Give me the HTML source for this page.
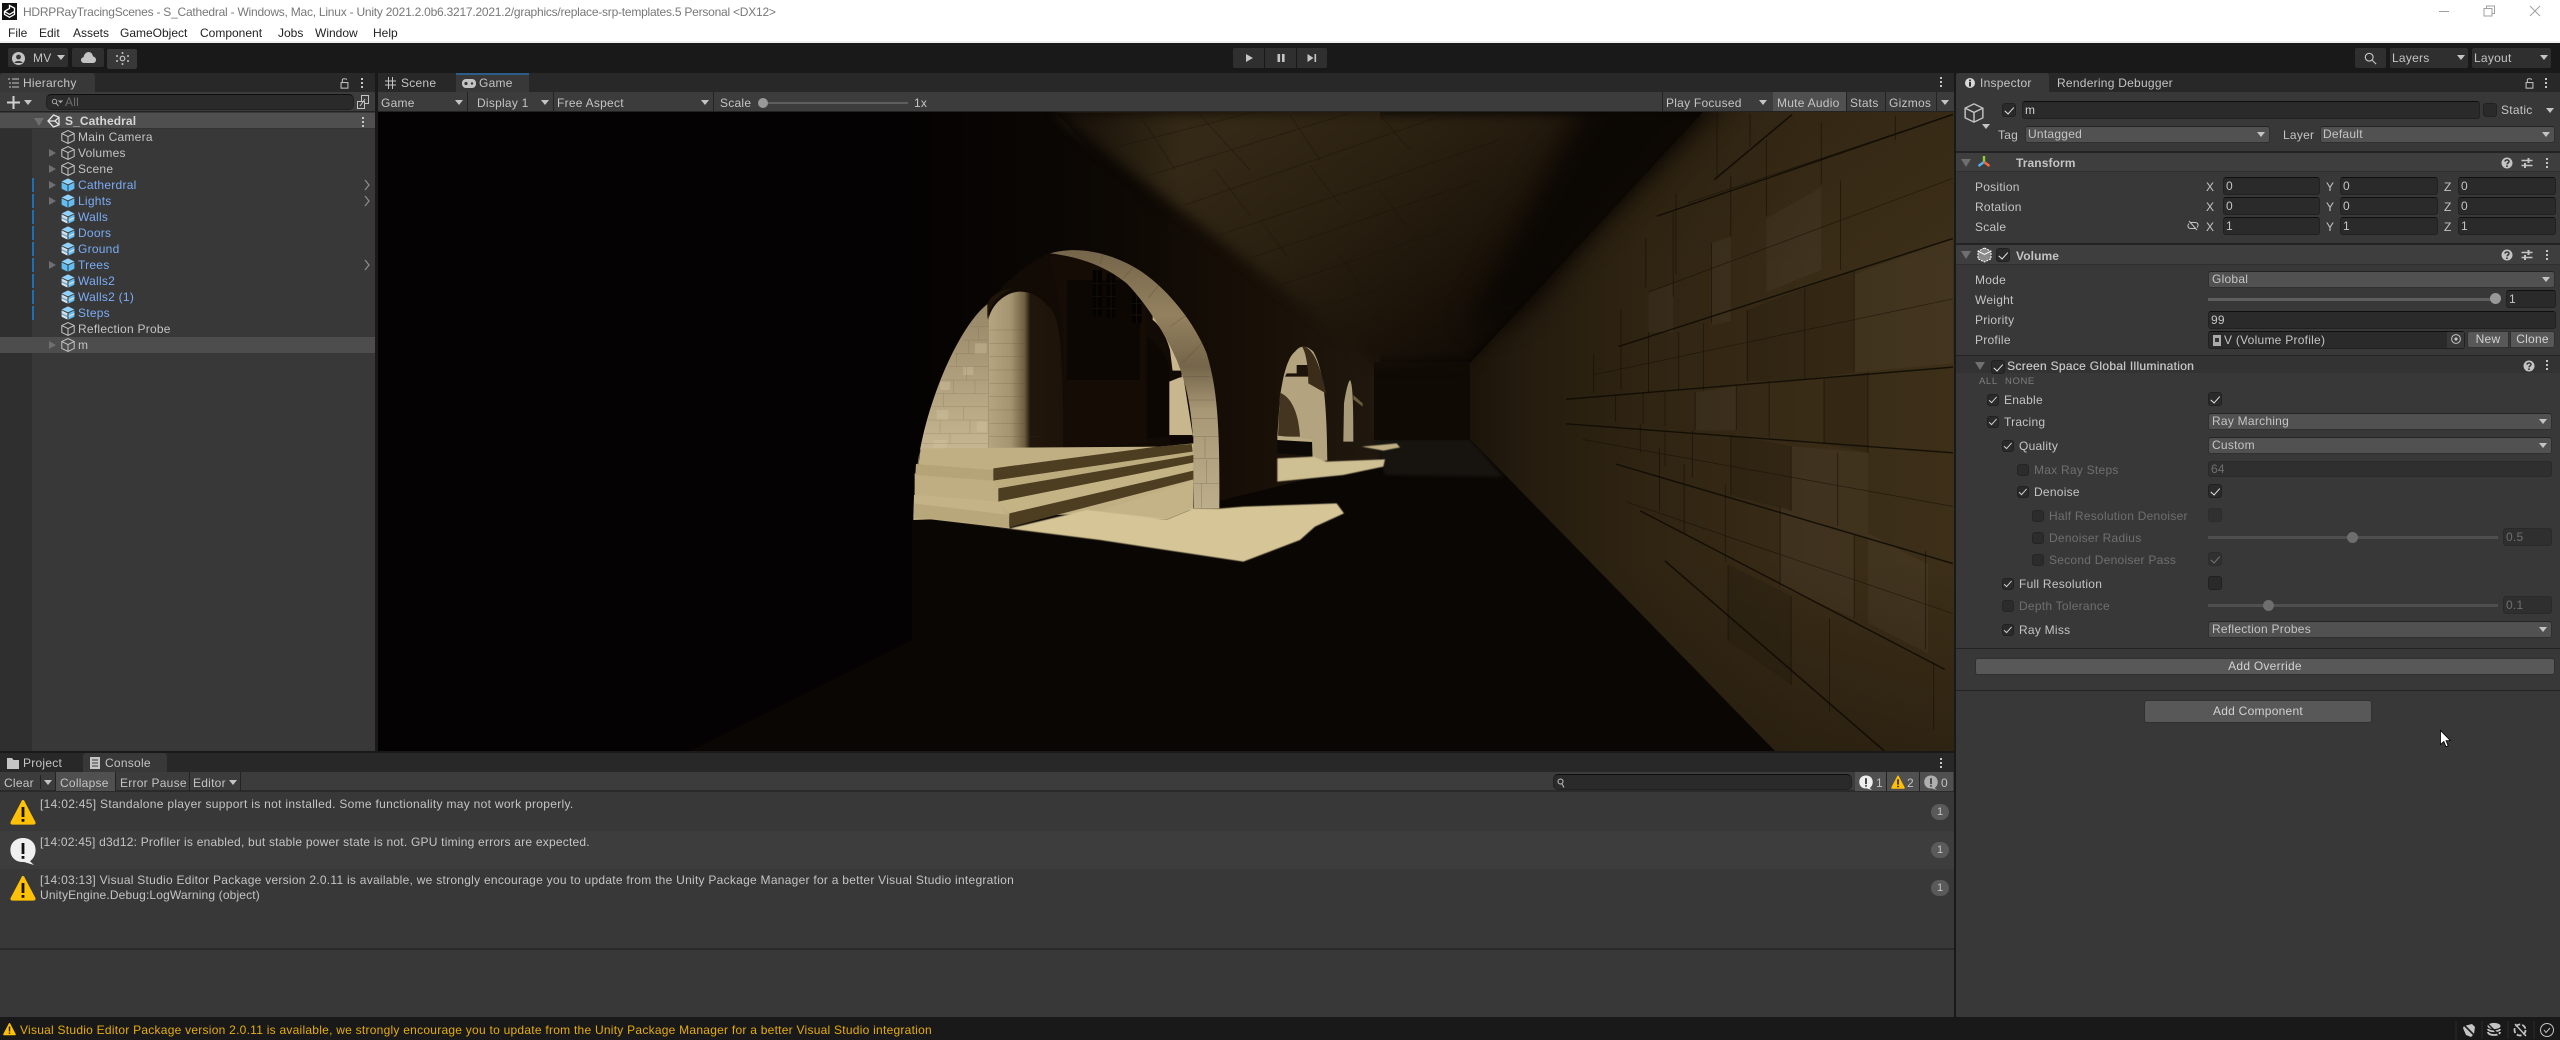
<!DOCTYPE html>
<html><head><meta charset="utf-8"><title>Unity</title>
<style>
html,body{margin:0;padding:0;background:#191919;width:2560px;height:1040px;overflow:hidden}
body{position:relative;font-family:"Liberation Sans",sans-serif;font-size:12px;color:#c4c4c4}
.r{position:absolute;box-sizing:border-box}
.t{position:absolute;line-height:16px;height:16px;white-space:nowrap;letter-spacing:.25px;color:#c4c4c4}
.b{color:#7bacf5}.d{color:#6f6f6f}.w{color:#d2d2d2}
.ar{position:absolute;width:0;height:0;border-left:4px solid transparent;border-right:4px solid transparent;border-top:5px solid #c4c4c4}
.tg{position:absolute;width:0;height:0;border-top:4.5px solid transparent;border-bottom:4.5px solid transparent;border-left:7px solid #6f6f6f}
.tgd{position:absolute;width:0;height:0;border-left:5px solid transparent;border-right:5px solid transparent;border-top:8px solid #6f6f6f}
.f{position:absolute;box-sizing:border-box;background:#2a2a2a;border:1px solid #212121;border-top-color:#0f0f0f;border-radius:3px}
.dd{position:absolute;box-sizing:border-box;background:#515151;border:1px solid #303030;border-top-color:#242424;border-radius:3px;height:17px}
.btn{position:absolute;box-sizing:border-box;background:#585858;border:1px solid #303030;border-radius:3px;text-align:center;line-height:15px;letter-spacing:.25px;color:#d2d2d2}
.cb{position:absolute;box-sizing:border-box;width:14px;height:14px;background:#2a2a2a;border:1px solid #212121;border-radius:3px}
.cs{width:12px;height:12px}
.ck::after{content:"";position:absolute;left:3.5px;top:0.5px;width:3.5px;height:7.5px;border:solid #e4e4e4;border-width:0 1.5px 1.5px 0;transform:rotate(42deg)}
.cs.ck::after{left:3px;top:0;width:3px;height:6.5px;border-width:0 1px 1px 0;border-color:#cfcfcf}
.dck::after{border-color:#777}
.dots{position:absolute;width:2px;height:2px;background:#c4c4c4;box-shadow:0 4px #c4c4c4,0 8px #c4c4c4}
.sv{position:absolute;overflow:visible}
.sep{position:absolute;width:1px;background:#232323}
.bl{position:absolute;left:32px;width:2px;height:14px;background:#1c6fb5}
</style></head><body>

<svg width="0" height="0" style="position:absolute">
<defs>
<symbol id="cube" viewBox="0 0 14 14"><path d="M7 .6 13.2 3.6V10.4L7 13.4 .8 10.4V3.6ZM.8 3.6 7 6.6 13.2 3.6M7 6.6V13.4" fill="none" stroke="#c4c4c4" stroke-width="1"/></symbol>
<symbol id="pf" viewBox="0 0 14 14"><path d="M7 .4 13.4 3.5 7 6.4 .6 3.5Z" fill="#8fd2fb"/><path d="M.6 4.4 6.5 7.2V13.6L.6 10.7Z" fill="#62bdf2"/><path d="M13.4 4.4 7.5 7.2V13.6L13.4 10.7Z" fill="#62bdf2"/></symbol>
<symbol id="pm" viewBox="0 0 14 14"><path d="M7 .4 13.4 3.5 7 6.4 .6 3.5Z" fill="#8fd2fb"/><path d="M.6 4.4 6.5 7.2V13.6L.6 10.7Z" fill="#d8dfe5"/><path d="M.6 7 6.5 9.8V11.2L.6 8.4Z" fill="#62a8d8"/><path d="M13.4 4.4 7.5 7.2V13.6L13.4 10.7Z" fill="#62bdf2"/><path d="M13.4 7 7.5 9.8V11.2L13.4 8.4Z" fill="#d8dfe5"/></symbol>
<symbol id="warn" viewBox="0 0 26 26"><path d="M13 1 C14 1 14.6 2 15 3.2L25.4 23C26 24.6 25 25.6 23.6 25.6H2.4C1 25.6 0 24.6.6 23L11 3.2C11.4 2 12 1 13 1Z" fill="#ffc107"/><rect x="11.6" y="8" width="2.8" height="10" fill="#1a1407"/><rect x="11.6" y="20" width="2.8" height="2.8" fill="#1a1407"/></symbol>
<symbol id="info" viewBox="0 0 26 28"><path d="M13 1C20.5 1 25.6 6 25.6 13S21 23.5 20 24.2L24 28 14 25C5.5 25.6.4 20 .4 13S5.5 1 13 1Z" fill="#efefef"/><rect x="11.6" y="6" width="2.8" height="11" fill="#111"/><rect x="11.6" y="19" width="2.8" height="2.8" fill="#111"/></symbol>
<symbol id="help" viewBox="0 0 12 12"><circle cx="6" cy="6" r="5.5" fill="#c4c4c4"/><path d="M4 4.6C4 2.4 8 2.4 8 4.5 8 6 6 6 6 7.4" fill="none" stroke="#333" stroke-width="1.5"/><rect x="5.2" y="8.4" width="1.6" height="1.6" fill="#333"/></symbol>
<symbol id="sl" viewBox="0 0 12 12"><path d="M.5 3.5H11.5M.5 8.5H11.5" stroke="#c4c4c4" stroke-width="1.4"/><path d="M7.5 1V6M4 6V11" stroke="#c4c4c4" stroke-width="2"/></symbol>
<symbol id="lock" viewBox="0 0 10 14"><path d="M2.5 6V3.2C2.5 1.6 7.5 1.6 7.5 3.2" fill="none" stroke="#c4c4c4" stroke-width="1.2"/><rect x="1" y="6.5" width="8" height="6.5" fill="none" stroke="#c4c4c4" stroke-width="1.2"/></symbol>
<linearGradient id="gBase" gradientUnits="userSpaceOnUse" x1="900" x2="1374" y1="0" y2="0"><stop offset="0" stop-color="#040202"/><stop offset=".45" stop-color="#0d0804"/><stop offset=".75" stop-color="#181007"/><stop offset="1" stop-color="#20170e"/></linearGradient>
<linearGradient id="gCeil" gradientUnits="userSpaceOnUse" x1="1250" y1="113" x2="1440" y2="370"><stop offset="0" stop-color="#342916"/><stop offset=".4" stop-color="#2a2011"/><stop offset=".75" stop-color="#1d150a"/><stop offset="1" stop-color="#120c06"/></linearGradient>
<linearGradient id="gCeilL" gradientUnits="userSpaceOnUse" x1="1060" y1="113" x2="1180" y2="113"><stop offset="0" stop-color="#0a0603" stop-opacity=".75"/><stop offset="1" stop-color="#0a0603" stop-opacity="0"/></linearGradient>
<linearGradient id="gWall" gradientUnits="userSpaceOnUse" x1="1470" y1="0" x2="1954" y2="0"><stop offset="0" stop-color="#1b140a"/><stop offset=".12" stop-color="#251c0f"/><stop offset=".35" stop-color="#2f2412"/><stop offset=".7" stop-color="#392c17"/><stop offset="1" stop-color="#3d2f18"/></linearGradient>
<linearGradient id="gWallV" gradientUnits="userSpaceOnUse" x1="0" y1="113" x2="0" y2="751"><stop offset="0" stop-color="#0c0804" stop-opacity=".12"/><stop offset=".25" stop-color="#0c0804" stop-opacity="0"/><stop offset=".7" stop-color="#0c0804" stop-opacity="0"/><stop offset="1" stop-color="#0c0804" stop-opacity=".3"/></linearGradient>
<linearGradient id="gCol" gradientUnits="userSpaceOnUse" x1="265" x2="490" y1="0" y2="0"><stop offset="0" stop-color="#b5a580"/><stop offset=".3" stop-color="#a4946f"/><stop offset=".48" stop-color="#6f5f42"/><stop offset=".56" stop-color="#20160b"/><stop offset="1" stop-color="#1d130a"/></linearGradient>
<linearGradient id="gSof" gradientUnits="userSpaceOnUse" x1="0" y1="30" x2="0" y2="805"><stop offset="0" stop-color="#75654a"/><stop offset=".25" stop-color="#93815e"/><stop offset=".45" stop-color="#75654a"/><stop offset=".62" stop-color="#a89876"/><stop offset="1" stop-color="#bdae8b"/></linearGradient>
<linearGradient id="gLw" gradientUnits="userSpaceOnUse" x1="0" y1="200" x2="0" y2="630"><stop offset="0" stop-color="#968767"/><stop offset=".5" stop-color="#b09f7c"/><stop offset="1" stop-color="#c6b691"/></linearGradient>
<filter id="bl1" color-interpolation-filters="sRGB"><feGaussianBlur stdDeviation="1.6"/></filter>
<filter id="bl4" color-interpolation-filters="sRGB" x="-10%" y="-10%" width="120%" height="120%"><feGaussianBlur stdDeviation="6"/></filter>
<filter id="bl15" color-interpolation-filters="sRGB" x="-30%" y="-30%" width="160%" height="160%"><feGaussianBlur stdDeviation="14"/></filter>
<filter id="bl05" color-interpolation-filters="sRGB"><feGaussianBlur stdDeviation=".8"/></filter>
</defs></svg>

<!-- Title bar -->
<div class="r" style="left:0;top:0;width:2560px;height:43px;background:#fff;border-bottom:2px solid #f0f0f0"></div>
<svg class="sv" style="left:2px;top:3px" width="15" height="17" viewBox="0 0 15 17"><rect width="15" height="17" fill="#111"/><path d="M7.5 2.5 12.5 5.2V11.4L7.5 14.3 2.5 11.4V8.4L7.5 5.4ZM2.5 8.4 7.5 11.4 12.5 8.4" fill="none" stroke="#fff" stroke-width="1.3"/></svg>
<div class="t" style="left:23px;top:4px;color:#787878;letter-spacing:-.23px">HDRPRayTracingScenes - S_Cathedral - Windows, Mac, Linux - Unity 2021.2.0b6.3217.2021.2/graphics/replace-srp-templates.5 Personal &lt;DX12&gt;</div>
<div class="t" style="left:8px;top:25px;color:#222;letter-spacing:0">File</div>
<div class="t" style="left:39px;top:25px;color:#222;letter-spacing:0">Edit</div>
<div class="t" style="left:73px;top:25px;color:#222;letter-spacing:0">Assets</div>
<div class="t" style="left:120px;top:25px;color:#222;letter-spacing:0">GameObject</div>
<div class="t" style="left:200px;top:25px;color:#222;letter-spacing:0">Component</div>
<div class="t" style="left:278px;top:25px;color:#222;letter-spacing:0">Jobs</div>
<div class="t" style="left:315px;top:25px;color:#222;letter-spacing:0">Window</div>
<div class="t" style="left:373px;top:25px;color:#222;letter-spacing:0">Help</div>
<svg class="sv" style="left:2430px;top:4px" width="120" height="14" viewBox="0 0 120 14" fill="none" stroke="#a0a0a0"><path d="M9 7.5H19"/><path d="M54 4.5H62V12H54ZM56.5 4.5V2H64.5V9.5H62"/><path d="M100 2 110 12M110 2 100 12"/></svg>

<!-- Top toolbar -->
<div class="r" style="left:8px;top:48px;width:60px;height:19px;background:#2f2f2f;border-radius:2px"></div>
<svg class="sv" style="left:12px;top:52px" width="13" height="13" viewBox="0 0 13 13"><circle cx="6.5" cy="6.5" r="6.5" fill="#c4c4c4"/><circle cx="6.5" cy="5" r="2.4" fill="#383838"/><path d="M2.4 11C3 8.4 10 8.4 10.6 11" fill="#383838"/></svg>
<div class="t" style="left:33px;top:50px">MV</div>
<div class="ar" style="left:57px;top:55px"></div>
<div class="r" style="left:72px;top:48px;width:32px;height:19px;background:#2f2f2f;border-radius:2px"></div>
<svg class="sv" style="left:81px;top:52px" width="15" height="11" viewBox="0 0 15 11"><path d="M3.5 11C1 11 0 9.5 0 8 0 6.5 1 5.4 2.6 5.2 3 2.2 5.2 0 7.6 0 10 0 11.6 2 12 4.4 13.8 4.8 15 6 15 8 15 9.8 13.6 11 12 11Z" fill="#c4c4c4"/></svg>
<div class="r" style="left:107px;top:49px;width:30px;height:20px;background:#383838;border-radius:2px"></div>
<svg class="sv" style="left:116px;top:52px" width="13" height="13" viewBox="0 0 13 13" fill="#c4c4c4"><circle cx="6.5" cy="6.5" r="2.3" fill="none" stroke="#c4c4c4" stroke-width="1.2"/><circle cx="6.5" cy="1" r="1"/><circle cx="6.5" cy="12" r="1"/><circle cx="1" cy="4" r="1"/><circle cx="12" cy="4" r="1"/><circle cx="1" cy="9" r="1"/><circle cx="12" cy="9" r="1"/></svg>

<div class="r" style="left:1233px;top:48px;width:31px;height:20px;background:#2f2f2f;border-radius:2px 0 0 2px"></div>
<div class="r" style="left:1265px;top:48px;width:31px;height:20px;background:#2f2f2f"></div>
<div class="r" style="left:1297px;top:48px;width:30px;height:20px;background:#2f2f2f;border-radius:0 2px 2px 0"></div>
<svg class="sv" style="left:1233px;top:48px" width="94" height="20" viewBox="0 0 94 20" fill="#c4c4c4"><path d="M13 6 20 10 13 14Z"/><rect x="44.5" y="6" width="2.6" height="8"/><rect x="49" y="6" width="2.6" height="8"/><path d="M74.5 6 80.5 10 74.5 14Z"/><rect x="81.5" y="6" width="1.6" height="8"/></svg>

<div class="r" style="left:2355px;top:48px;width:31px;height:20px;background:#2f2f2f;border-radius:2px"></div>
<svg class="sv" style="left:2364px;top:52px" width="13" height="13" viewBox="0 0 15 15" fill="none" stroke="#c4c4c4" stroke-width="1.3"><circle cx="6" cy="6" r="4.5"/><path d="M9.5 9.5 14 14"/></svg>
<div class="r" style="left:2390px;top:48px;width:78px;height:20px;background:#2f2f2f;border-radius:2px"></div>
<div class="t" style="left:2392px;top:50px">Layers</div><div class="ar" style="left:2457px;top:55px"></div>
<div class="r" style="left:2472px;top:48px;width:79px;height:20px;background:#2f2f2f;border-radius:2px"></div>
<div class="t" style="left:2474px;top:50px">Layout</div><div class="ar" style="left:2540px;top:55px"></div>

<!-- Hierarchy panel -->
<div class="r" style="left:0;top:73px;width:375px;height:19px;background:#282828"></div>
<div class="r" style="left:0;top:73px;width:95px;height:19px;background:#383838;border-radius:3px 3px 0 0"></div>
<svg class="sv" style="left:8px;top:78px" width="11" height="10" viewBox="0 0 11 10" stroke="#c4c4c4"><path d="M0 1H2M4 1H11M1 5H3M4 5H11M1 9H3M4 9H11"/></svg>
<div class="t" style="left:23px;top:75px">Hierarchy</div>
<svg class="sv" style="left:340px;top:77px" width="9" height="12"><use href="#lock" width="9" height="12"/></svg>
<div class="dots" style="left:361px;top:78px"></div>
<div class="r" style="left:0;top:92px;width:375px;height:20px;background:#3c3c3c;border-bottom:1px solid #232323"></div>
<svg class="sv" style="left:7px;top:96px" width="13" height="13" viewBox="0 0 13 13"><path d="M6.5 0V13M0 6.5H13" stroke="#d0d0d0" stroke-width="2"/></svg>
<div class="ar" style="left:24px;top:100px"></div>
<div class="f" style="left:46px;top:94px;width:308px;height:16px;border-radius:5px"></div>
<svg class="sv" style="left:51px;top:98px" width="11" height="9" viewBox="0 0 11 9" fill="none" stroke="#a8a8a8"><circle cx="3.5" cy="3.5" r="2.2"/><path d="M5 5 7.5 8M8 3H11L9.5 4.5Z"/></svg>
<div class="t" style="left:65px;top:94px;color:#6e6e6e">All</div>
<svg class="sv" style="left:357px;top:95px" width="12" height="14" viewBox="0 0 12 14" fill="none" stroke="#c4c4c4"><rect x="4.5" y=".5" width="7" height="8"/><rect x=".5" y="6.5" width="7" height="7" fill="#3c3c3c"/><path d="M3 11 8 4"/></svg>
<div class="r" style="left:0;top:112px;width:375px;height:639px;background:#383838"></div>
<div class="r" style="left:0;top:129px;width:32px;height:622px;background:#2f2f2f"></div>
<div class="r" style="left:0;top:113px;width:375px;height:16px;background:#4f4f4f;border-bottom:1px solid #333"></div>
<div class="tgd" style="left:34px;top:118px"></div>
<svg class="sv" style="left:47px;top:114px" width="13" height="14" viewBox="0 0 13 14" fill="none" stroke="#e4e4e4" stroke-width="1.3"><path d="M6.5 1 12 3.2V10.8L6.5 13 1 7ZM1 7 8 7M8 7 12 3.2M8 7 12 10.8"/></svg>
<div class="t" style="left:65px;top:113px;color:#d6d6d6;font-weight:bold;letter-spacing:.1px">S_Cathedral</div>
<div class="dots" style="left:362px;top:117px"></div>

<div class="r" style="left:0;top:337px;width:375px;height:16px;background:#4d4d4d"></div>

<!-- hierarchy rows -->
<svg class="sv" style="left:61px;top:130px" width="14" height="14"><use href="#cube" width="14" height="14"/></svg><div class="t" style="left:78px;top:129px">Main Camera</div>
<div class="tg" style="left:49px;top:148.5px"></div><svg class="sv" style="left:61px;top:146px" width="14" height="14"><use href="#cube" width="14" height="14"/></svg><div class="t" style="left:78px;top:145px">Volumes</div>
<div class="tg" style="left:49px;top:164.5px"></div><svg class="sv" style="left:61px;top:162px" width="14" height="14"><use href="#cube" width="14" height="14"/></svg><div class="t" style="left:78px;top:161px">Scene</div>
<div class="bl" style="top:178px"></div><div class="tg" style="left:49px;top:180.5px"></div><svg class="sv" style="left:61px;top:178px" width="14" height="14"><use href="#pf" width="14" height="14"/></svg><div class="t b" style="left:78px;top:177px">Catherdral</div>
<div class="bl" style="top:194px"></div><div class="tg" style="left:49px;top:196.5px"></div><svg class="sv" style="left:61px;top:194px" width="14" height="14"><use href="#pf" width="14" height="14"/></svg><div class="t b" style="left:78px;top:193px">Lights</div>
<div class="bl" style="top:210px"></div><svg class="sv" style="left:61px;top:210px" width="14" height="14"><use href="#pm" width="14" height="14"/></svg><div class="t b" style="left:78px;top:209px">Walls</div>
<div class="bl" style="top:226px"></div><svg class="sv" style="left:61px;top:226px" width="14" height="14"><use href="#pm" width="14" height="14"/></svg><div class="t b" style="left:78px;top:225px">Doors</div>
<div class="bl" style="top:242px"></div><svg class="sv" style="left:61px;top:242px" width="14" height="14"><use href="#pm" width="14" height="14"/></svg><div class="t b" style="left:78px;top:241px">Ground</div>
<div class="bl" style="top:258px"></div><div class="tg" style="left:49px;top:260.5px"></div><svg class="sv" style="left:61px;top:258px" width="14" height="14"><use href="#pf" width="14" height="14"/></svg><div class="t b" style="left:78px;top:257px">Trees</div>
<div class="bl" style="top:274px"></div><svg class="sv" style="left:61px;top:274px" width="14" height="14"><use href="#pm" width="14" height="14"/></svg><div class="t b" style="left:78px;top:273px">Walls2</div>
<div class="bl" style="top:290px"></div><svg class="sv" style="left:61px;top:290px" width="14" height="14"><use href="#pm" width="14" height="14"/></svg><div class="t b" style="left:78px;top:289px">Walls2 (1)</div>
<div class="bl" style="top:306px"></div><svg class="sv" style="left:61px;top:306px" width="14" height="14"><use href="#pm" width="14" height="14"/></svg><div class="t b" style="left:78px;top:305px">Steps</div>
<svg class="sv" style="left:61px;top:322px" width="14" height="14"><use href="#cube" width="14" height="14"/></svg><div class="t" style="left:78px;top:321px">Reflection Probe</div>
<div class="tg" style="left:49px;top:340.5px"></div><svg class="sv" style="left:61px;top:338px" width="14" height="14"><use href="#cube" width="14" height="14"/></svg><div class="t" style="left:78px;top:337px">m</div>
<svg class="sv" style="left:364px;top:180px" width="7" height="90" viewBox="0 0 7 90" fill="none" stroke="#8a8a8a" stroke-width="1.3"><path d="M1 0 5 5 1 10M1 16 5 21 1 26M1 80 5 85 1 90"/></svg>

<!-- Game panel -->
<div class="r" style="left:378px;top:73px;width:1576px;height:19px;background:#282828"></div>
<div class="r" style="left:456px;top:73px;width:73px;height:19px;background:#383838;border-top:2px solid #2c5d87"></div>
<svg class="sv" style="left:385px;top:77px" width="11" height="12" viewBox="0 0 11 12" stroke="#c4c4c4"><path d="M3.5 0V12M7.5 0V12M0 4H11M0 8H11"/></svg>
<div class="t" style="left:401px;top:75px">Scene</div>
<svg class="sv" style="left:462px;top:79px" width="14" height="9" viewBox="0 0 14 9"><rect width="14" height="9" rx="4" fill="#c4c4c4"/><circle cx="4" cy="4.5" r="1.6" fill="#383838"/><circle cx="10" cy="4.5" r="1.2" fill="#383838"/></svg>
<div class="t" style="left:479px;top:75px">Game</div>
<div class="dots" style="left:1940px;top:77px"></div>
<div class="r" style="left:378px;top:92px;width:1576px;height:20px;background:#3c3c3c;border-bottom:1px solid #232323"></div>
<div class="t" style="left:381px;top:95px">Game</div><div class="ar" style="left:455px;top:100px"></div><div class="sep" style="left:467px;top:92px;height:19px"></div>
<div class="t" style="left:477px;top:95px">Display 1</div><div class="ar" style="left:541px;top:100px"></div><div class="sep" style="left:553px;top:92px;height:19px"></div>
<div class="t" style="left:557px;top:95px">Free Aspect</div><div class="ar" style="left:701px;top:100px"></div><div class="sep" style="left:713px;top:92px;height:19px"></div>
<div class="t" style="left:720px;top:95px">Scale</div>
<div class="r" style="left:763px;top:102px;width:145px;height:2px;background:#5e5e5e"></div>
<div class="r" style="left:758px;top:98px;width:10px;height:10px;border-radius:50%;background:#999"></div>
<div class="t" style="left:914px;top:95px">1x</div>
<div class="sep" style="left:1662px;top:92px;height:19px"></div>
<div class="t" style="left:1666px;top:95px">Play Focused</div><div class="ar" style="left:1759px;top:100px"></div>
<div class="r" style="left:1773px;top:92px;width:73px;height:19px;background:#505050"></div>
<div class="t" style="left:1777px;top:95px">Mute Audio</div><div class="sep" style="left:1846px;top:92px;height:19px"></div>
<div class="t" style="left:1850px;top:95px">Stats</div><div class="sep" style="left:1885px;top:92px;height:19px"></div>
<div class="t" style="left:1889px;top:95px">Gizmos</div><div class="sep" style="left:1936px;top:92px;height:19px"></div><div class="ar" style="left:1941px;top:100px"></div>

<!-- Game view -->
<svg class="sv" style="left:378px;top:112px;overflow:hidden" width="1576" height="639" viewBox="378 112 1576 639">
<rect x="378" y="112" width="1576" height="639" fill="#040202"/>
<rect x="900" y="112" width="480" height="420" fill="url(#gBase)"/>
<!-- floor -->
<path d="M1222 500 1470 439 1775 751H690L912 640V520Z" fill="#0a0603"/>
<path d="M1374 439 1470 439 1503 477 1385 475Z" fill="#171410" filter="url(#bl1)"/>
<!-- end wall -->
<rect x="1374" y="362" width="97" height="78" fill="#100a05"/>
<!-- right wall -->
<path d="M1470 363 1703 112H1954V751H1775L1470 439Z" fill="url(#gWall)"/>
<path d="M1470 363 1703 112H1954V751H1775L1470 439Z" fill="url(#gWallV)"/>
<!-- brick lines, z8 coords -->
<g transform="translate(1100,60) scale(.5485,.4464)" fill="none" stroke="#0e0a04">
<g fill="#ffffff" stroke="none" opacity=".03">
<path d="M1215 355 1315 285V470L1215 520ZM1375 480 1555 400V680L1375 700ZM1260 865 1400 880V1075L1260 1010ZM1115 410 1150 395V585L1115 595ZM1085 745 1160 730V830L1085 830ZM1240 1000 1375 1065V1250L1240 1180ZM1000 520 1045 500V610L1000 610ZM1400 1060 1510 1130V1330L1400 1260Z"/>
</g>
<g fill="#000" stroke="none" opacity=".1">
<path d="M1285 510 1375 470V700L1285 715ZM1180 560 1285 510V715L1180 720ZM1320 715 1400 700V880L1320 860ZM1150 840 1260 865V1010L1150 975ZM1145 1130 1260 1200V1400L1145 1300Z"/>
</g>
<g stroke-width="3.2" opacity=".85">
<path d="M1120 268 1262 122M1015 350 1555 122M945 642 1555 400M850 760 1555 688M850 815 1555 880M940 905 1555 1128M985 1010 1540 1365M1030 1122 1430 1548"/>
</g>
<g stroke-width="1.6" opacity=".55">
<path d="M1125 120 1125 262M1185 195V120M1215 178 1215 350M1315 140 1315 280M1450 125V180M1350 270V470M1150 260V395M1050 300V480M995 400V510M1115 410V590M1045 340V530M1375 470V700M1285 510V715M1180 560V720M1100 590V740M1055 610V740M1000 610V745M950 560V740M900 660V745"/>
<path d="M1400 700V880M1320 715V860M1220 720V845M1160 730V830M1085 745V830M1030 745V820M990 745V815M940 750V810"/>
<path d="M1345 880V1045M1260 865V1010M1150 840V975M1080 830V935M1030 830V910M985 815V880M1505 1100V1320M1375 1065V1250M1240 1000V1180M1140 950V1125M1065 905V1060M1020 870V1010"/>
<path d="M1260 1200V1400M1145 1130V1300M1330 1250V1460M1520 1350V1500"/>
<path d="M1072 320 1555 122M1000 520 1555 265M900 705 1555 535M880 850 1555 1000M960 990 1555 1240"/>
</g>
</g>
<!-- ceiling -->
<path d="M1056 113 1347 339 1374 364 1470 363 1703 113Z" fill="url(#gCeil)" filter="url(#bl4)"/>
<path d="M1056 113 1180 250 1240 113Z" fill="url(#gCeilL)"/>
<g fill="none" stroke="#1b1409" stroke-width="1" opacity=".45">
<path d="M1120 146 1250 113M1150 175 1350 113M1185 205 1450 113M1220 235 1500 140M1250 258 1480 180M1280 285 1460 225M1310 310 1440 270M1332 330 1430 305"/>
<path d="M1140 115 1175 170M1200 115 1250 170M1290 115 1320 160M1380 115 1410 150M1215 170 1250 215M1310 165 1340 205M1260 220 1290 260M1380 190 1405 225M1340 255 1360 285"/>
</g>
<!-- dark wedge between ceiling and wall -->
<path d="M1590 90 1735 90 1595 230 1530 310 1490 330 1470 320Z" fill="#0a0603" opacity=".9" filter="url(#bl15)"/>
<!-- arches in z9 coords -->
<g transform="translate(900,240) scale(.33333)">
<path d="M40 840 42 760C50 660 70 560 110 450 150 340 210 230 265 190 320 120 390 60 450 40 520 20 610 30 700 80 790 130 880 240 920 340 950 440 960 540 958 805L880 810 40 840Z" fill="#120a05"/>
<g filter="url(#bl05)">
<!-- lit back wall -->
<path d="M44 760C50 660 70 560 110 450 150 340 210 230 265 190V632L60 628Z" fill="url(#gLw)"/>
<g fill="#d6c8a4" opacity=".35"><rect x="225" y="310" width="35" height="32"/><rect x="120" y="425" width="30" height="25"/><rect x="230" y="545" width="30" height="30"/><rect x="110" y="510" width="35" height="30"/><rect x="190" y="380" width="30" height="25"/><rect x="100" y="600" width="40" height="28"/></g>
<g stroke="#5d4f38" stroke-width="1.5" opacity=".3" fill="none"><path d="M210 260H265M190 300H265M165 340H265M145 380H265M125 420H265M110 460H265M95 500H265M85 540H265M75 580H265M65 610H265M205 300V340M235 260V300M170 340V380M200 380V420M160 420V460M225 420V460M130 460V500M190 500V540M120 540V580M210 540V580M150 580V610"/></g>
<!-- column -->
<path d="M265 240C275 190 320 155 360 155 400 155 430 180 440 195 475 220 490 270 490 622L265 632Z" fill="url(#gCol)"/>
<g stroke="#4e4028" stroke-width="1.5" opacity=".3" fill="none"><path d="M270 270H385M268 310H388M268 350H388M268 390H388M268 430H388M268 470H388M268 510H388M268 550H388M268 590H420"/></g>
<path d="M262 240C270 190 300 160 340 145 300 150 275 165 262 190Z" fill="#1e140a"/>
<!-- back dark building -->
<path d="M490 622V260L450 50 600 40 740 170V610Z" fill="#150c06"/>
<path d="M500 120H720V420H500Z" fill="#0a0503" opacity=".7"/>
<g fill="#050302"><rect x="578" y="90" width="28" height="140"/><rect x="620" y="100" width="26" height="132"/><rect x="695" y="150" width="30" height="100"/></g>
<g stroke="#1e140b" stroke-width="2"><path d="M578 130H606M578 170H606M578 205H606M620 130H646M620 170H646M620 205H646M695 190H725M695 225H725M591 90V230M633 100V232M710 150V250"/></g>
<path d="M740 290C770 310 805 340 808 400V590L740 595Z" fill="#0d0704"/>
<!-- right lit sliver -->
<path d="M758 218C790 260 830 340 850 410L878 585H808V425L845 410 818 395 810 330C800 290 775 250 758 240Z" fill="#c7b68e"/>
<path d="M808 392 845 392 845 412 820 412 808 425Z" fill="#120a05"/>
<!-- soffit -->
<path d="M450 40C520 20 610 30 700 80 790 130 880 240 920 340 950 440 960 540 958 805L882 805 878 580C870 470 850 410 830 360 800 290 740 190 680 130 620 80 540 50 450 40Z" fill="url(#gSof)"/>
<g stroke="#3e3120" stroke-width="1.6" opacity=".35" fill="none"><path d="M880 655H958M882 730H958M878 590H955M870 535H950M858 480H945M846 410H930M612 35 600 72M700 80 670 115M780 130 745 175M860 225 810 260M905 310 845 370M920 660V730M905 730V805M915 590V655"/></g>
<!-- floor stage -->
<path d="M62 625 780 620 880 610V810L40 840 44 760Z" fill="#c0af83"/>
<path d="M44 700 290 720 295 785 44 760Z" fill="#bfae81"/>
<path d="M42 765 300 785 330 865 40 830Z" fill="#c4b386"/>
<path d="M48 672 280 690V722L46 705Z" fill="#b5a478"/>
<path d="M42 790 328 825V865L40 832Z" fill="#b8a77b"/>
<!-- stairs -->
<path d="M280 685 770 620 875 612 878 635 280 722Z" fill="#4d3e22"/>
<path d="M282 722 880 635V648L296 748Z" fill="#bcab7c"/>
<path d="M295 745 880 645 880 668 295 785Z" fill="#4d3e22"/>
<path d="M296 785 880 668V694L330 822Z" fill="#c4b385"/>
<path d="M328 820 880 692 880 718 328 862Z" fill="#4d3e22"/>
<path d="M560 825 880 722V805L800 838Z" fill="#c3b386"/>
<path d="M880 590H810V610H880Z" fill="#0c0704"/>
</g>
<!-- bright floor -->
<g filter="url(#bl1)">
<path d="M40 830 330 865 560 810 800 838 880 805 958 806 1030 800 1310 790 1332 820 1245 860 1200 900 1030 965 600 900Z" fill="#d6c697"/>
</g>
<!-- second arch -->
<g filter="url(#bl05)">
<path d="M1132 590 1140 470C1150 400 1165 350 1185 335 1200 315 1220 315 1240 335 1265 380 1280 450 1282 662L1238 662 1236 600Z" fill="#b3a47f"/>
<path d="M1140 458C1170 470 1195 510 1200 590H1134Z" fill="#43351f"/>
<path d="M1160 400H1190V375H1240V410H1155Z" fill="#1d130a"/>
<path d="M1205 318C1240 320 1262 380 1278 460L1225 430C1225 390 1220 340 1205 318Z" fill="#3a2c19"/>
<path d="M1132 590 1236 600V648L1132 640Z" fill="#0d0906"/>
<path d="M1132 587 1236 598V606L1132 600Z" fill="#bcac85"/>
<path d="M1330 605 1332 490C1338 450 1345 425 1350 420 1357 430 1360 470 1360 605Z" fill="#a99a78"/>
<path d="M1360 465 1388 490V500L1360 478Z" fill="#6b5c40"/>
</g>
<g filter="url(#bl1)">
<path d="M1132 655 1240 650 1280 665 1455 658 1450 680 1330 705 1132 725Z" fill="#cfc093"/>
<path d="M1385 620 1490 610 1500 622 1450 632Z" fill="#bfae83"/>
</g>
</g>
</svg>

<!-- Console panel -->
<div class="r" style="left:0;top:753px;width:1954px;height:19px;background:#282828"></div>
<div class="r" style="left:83px;top:753px;width:84px;height:19px;background:#383838;border-radius:3px 3px 0 0"></div>
<svg class="sv" style="left:7px;top:758px" width="12" height="11" viewBox="0 0 12 11" fill="#c4c4c4"><path d="M0 0H5L6.5 2H12V11H0Z"/></svg>
<div class="t" style="left:23px;top:755px">Project</div>
<svg class="sv" style="left:90px;top:757px" width="10" height="12" viewBox="0 0 10 12"><rect width="10" height="12" fill="#c4c4c4"/><path d="M2 3H8M2 6H8M2 9H8" stroke="#383838"/></svg>
<div class="t" style="left:105px;top:755px">Console</div>
<div class="dots" style="left:1940px;top:758px"></div>
<div class="r" style="left:0;top:772px;width:1954px;height:20px;background:#3c3c3c;border-bottom:2px solid #2a2a2a"></div>
<div class="t" style="left:4px;top:775px">Clear</div><div class="sep" style="left:40px;top:775px;height:14px"></div><div class="ar" style="left:44px;top:780px"></div><div class="sep" style="left:55px;top:772px;height:19px"></div>
<div class="r" style="left:56px;top:772px;width:59px;height:19px;background:#505050"></div>
<div class="t" style="left:60px;top:775px">Collapse</div><div class="sep" style="left:115px;top:772px;height:19px"></div>
<div class="t" style="left:120px;top:775px">Error Pause</div><div class="sep" style="left:189px;top:772px;height:19px"></div>
<div class="t" style="left:193px;top:775px">Editor</div><div class="ar" style="left:229px;top:780px"></div><div class="sep" style="left:240px;top:772px;height:19px"></div>
<div class="f" style="left:1553px;top:774px;width:299px;height:16px;border-radius:5px"></div>
<svg class="sv" style="left:1557px;top:778px" width="8" height="10" viewBox="0 0 8 10" fill="none" stroke="#c4c4c4"><circle cx="3.5" cy="3.5" r="2.5"/><path d="M5 6 7 9.5"/></svg>
<div class="r" style="left:1855px;top:772px;width:98px;height:19px;background:#505050"></div>
<div class="sep" style="left:1886px;top:772px;height:19px"></div><div class="sep" style="left:1919px;top:772px;height:19px"></div>
<svg class="sv" style="left:1859px;top:775px" width="14" height="15"><use href="#info" width="14" height="15"/></svg><div class="t" style="left:1876px;top:775px">1</div>
<svg class="sv" style="left:1891px;top:775px" width="14" height="14"><use href="#warn" width="14" height="14"/></svg><div class="t" style="left:1907px;top:775px">2</div>
<svg class="sv" style="left:1924px;top:775px;opacity:.6" width="14" height="15"><use href="#info" width="14" height="15"/></svg><div class="t" style="left:1941px;top:775px">0</div>
<div class="r" style="left:0;top:792px;width:1954px;height:225px;background:#383838"></div>
<div class="r" style="left:0;top:831px;width:1954px;height:38px;background:#3d3d3d"></div>
<div class="r" style="left:0;top:948px;width:1954px;height:2px;background:#2a2a2a"></div>
<svg class="sv" style="left:10px;top:799px" width="26" height="26"><use href="#warn" width="26" height="26"/></svg>
<svg class="sv" style="left:10px;top:837px" width="26" height="28"><use href="#info" width="26" height="28"/></svg>
<svg class="sv" style="left:10px;top:875px" width="26" height="26"><use href="#warn" width="26" height="26"/></svg>
<div class="t" style="left:40px;top:796px;letter-spacing:.3px">[14:02:45] Standalone player support is not installed. Some functionality may not work properly.</div>
<div class="t" style="left:40px;top:834px;letter-spacing:.22px">[14:02:45] d3d12: Profiler is enabled, but stable power state is not. GPU timing errors are expected.</div>
<div class="t" style="left:40px;top:872px;letter-spacing:.265px">[14:03:13] Visual Studio Editor Package version 2.0.11 is available, we strongly encourage you to update from the Unity Package Manager for a better Visual Studio integration</div>
<div class="t" style="left:40px;top:887px;letter-spacing:.15px">UnityEngine.Debug:LogWarning (object)</div>
<div class="r" style="left:1931px;top:804px;width:18px;height:16px;border-radius:8px;background:#5a5a5a;color:#c4c4c4;text-align:center;line-height:16px;font-size:11px">1</div>
<div class="r" style="left:1931px;top:842px;width:18px;height:16px;border-radius:8px;background:#5a5a5a;color:#c4c4c4;text-align:center;line-height:16px;font-size:11px">1</div>
<div class="r" style="left:1931px;top:880px;width:18px;height:16px;border-radius:8px;background:#5a5a5a;color:#c4c4c4;text-align:center;line-height:16px;font-size:11px">1</div>

<!-- Status bar -->
<svg class="sv" style="left:3px;top:1022px" width="13" height="14"><use href="#warn" width="13" height="14"/></svg>
<div class="t" style="left:20px;top:1022px;color:#e6ac0c;letter-spacing:.25px">Visual Studio Editor Package version 2.0.11 is available, we strongly encourage you to update from the Unity Package Manager for a better Visual Studio integration</div>
<svg class="sv" style="left:2456px;top:1021px" width="104" height="18" viewBox="0 0 104 18" fill="none" stroke="#c4c4c4">
<path d="M0 0V18M26 0V18M52 0V18M78 0V18" stroke="#2c2c2c"/>
<path d="M8 5 16 3 19 6 18 13 15 16 10 14 7 7Z" fill="#c4c4c4" stroke="none"/><path d="M6 2 20 16" stroke="#191919" stroke-width="1.6"/>
<ellipse cx="38" cy="5" rx="6" ry="2.6" fill="#c4c4c4"/><path d="M32 8C32 11 44 11 44 8M32 11C32 15 44 15 44 11" stroke-width="1.8"/><path d="M32 3 45 16" stroke="#191919" stroke-width="1.4"/>
<circle cx="64" cy="9" r="5.5" stroke-width="1.8" stroke-dasharray="5 2"/><path d="M59 3 70 15" stroke-width="1.4"/>
<circle cx="91" cy="9" r="6.5"/><path d="M88 9 90 11.5 94 7"/></svg>

<!-- Inspector -->
<div class="r" style="left:1956px;top:73px;width:604px;height:944px;background:#383838"></div>
<div class="r" style="left:1956px;top:73px;width:604px;height:19px;background:#282828"></div>
<div class="r" style="left:1956px;top:73px;width:93px;height:19px;background:#383838;border-radius:3px 3px 0 0"></div>
<svg class="sv" style="left:1965px;top:78px" width="10" height="10" viewBox="0 0 10 10"><circle cx="5" cy="5" r="5" fill="#d8d8d8"/><rect x="4" y="4" width="2" height="4.5" fill="#333"/><rect x="4" y="1.6" width="2" height="1.6" fill="#333"/></svg>
<div class="t" style="left:1980px;top:75px">Inspector</div>
<div class="t" style="left:2057px;top:75px">Rendering Debugger</div>
<svg class="sv" style="left:2525px;top:77px" width="9" height="12"><use href="#lock" width="9" height="12"/></svg>
<div class="dots" style="left:2545px;top:78px"></div>

<svg class="sv" style="left:1964px;top:103px" width="20" height="20"><use href="#cube" width="20" height="20"/></svg>
<div class="ar" style="left:1982px;top:124px;border-top-color:#c4c4c4"></div>
<div class="cb ck" style="left:2002px;top:103px"></div>
<div class="f" style="left:2022px;top:101px;width:458px;height:18px"></div>
<div class="t" style="left:2025px;top:102px;color:#d2d2d2">m</div>
<div class="cb" style="left:2483px;top:103px"></div>
<div class="t" style="left:2501px;top:102px">Static</div><div class="ar" style="left:2546px;top:108px"></div>
<div class="t" style="left:1998px;top:127px">Tag</div>
<div class="dd" style="left:2025px;top:126px;width:245px"></div><div class="t" style="left:2028px;top:126px">Untagged</div><div class="ar" style="left:2257px;top:132px"></div>
<div class="t" style="left:2283px;top:127px">Layer</div>
<div class="dd" style="left:2320px;top:126px;width:235px"></div><div class="t" style="left:2323px;top:126px">Default</div><div class="ar" style="left:2542px;top:132px"></div>
<div class="r" style="left:1956px;top:151px;width:604px;height:2px;background:#232323"></div>

<!-- Transform -->
<div class="r" style="left:1956px;top:153px;width:604px;height:19px;background:#3e3e3e;border-bottom:1px solid #2f2f2f"></div>
<div class="tgd" style="left:1961px;top:159px"></div>
<svg class="sv" style="left:1977px;top:155px" width="14" height="14" viewBox="0 0 14 14"><path d="M7 1V7" stroke="#8fd12e" stroke-width="2.4"/><path d="M7 7 1.5 11" stroke="#4fb3ee" stroke-width="2.4"/><path d="M7 7 12.5 11" stroke="#f06a3c" stroke-width="2.4"/></svg>
<div class="t" style="left:2016px;top:155px;font-weight:bold;letter-spacing:.1px">Transform</div>
<svg class="sv" style="left:2501px;top:157px" width="12" height="12"><use href="#help" width="12" height="12"/></svg>
<svg class="sv" style="left:2521px;top:157px" width="12" height="12"><use href="#sl" width="12" height="12"/></svg>
<div class="dots" style="left:2546px;top:158px"></div>
<div class="t" style="left:1975px;top:179px">Position</div><div class="t" style="left:1975px;top:199px">Rotation</div><div class="t" style="left:1975px;top:219px">Scale</div>
<svg class="sv" style="left:2187px;top:220px" width="12" height="11" viewBox="0 0 12 11" fill="none" stroke="#c4c4c4"><path d="M3 2.5H8C11 2.5 12 5 10 7.5M9 8.5H4C1 8.5 0 6 2 3.5M2 1 10 10"/></svg>
<div class="t" style="left:2206px;top:179px">X</div><div class="f" style="left:2223px;top:177px;width:97px;height:18px"></div><div class="t" style="left:2226px;top:178px">0</div>
<div class="t" style="left:2326px;top:179px">Y</div><div class="f" style="left:2340px;top:177px;width:98px;height:18px"></div><div class="t" style="left:2343px;top:178px">0</div>
<div class="t" style="left:2444px;top:179px">Z</div><div class="f" style="left:2458px;top:177px;width:98px;height:18px"></div><div class="t" style="left:2461px;top:178px">0</div>
<div class="t" style="left:2206px;top:199px">X</div><div class="f" style="left:2223px;top:197px;width:97px;height:18px"></div><div class="t" style="left:2226px;top:198px">0</div>
<div class="t" style="left:2326px;top:199px">Y</div><div class="f" style="left:2340px;top:197px;width:98px;height:18px"></div><div class="t" style="left:2343px;top:198px">0</div>
<div class="t" style="left:2444px;top:199px">Z</div><div class="f" style="left:2458px;top:197px;width:98px;height:18px"></div><div class="t" style="left:2461px;top:198px">0</div>
<div class="t" style="left:2206px;top:219px">X</div><div class="f" style="left:2223px;top:217px;width:97px;height:18px"></div><div class="t" style="left:2226px;top:218px">1</div>
<div class="t" style="left:2326px;top:219px">Y</div><div class="f" style="left:2340px;top:217px;width:98px;height:18px"></div><div class="t" style="left:2343px;top:218px">1</div>
<div class="t" style="left:2444px;top:219px">Z</div><div class="f" style="left:2458px;top:217px;width:98px;height:18px"></div><div class="t" style="left:2461px;top:218px">1</div>
<div class="r" style="left:1956px;top:243px;width:604px;height:2px;background:#232323"></div>

<!-- Volume -->
<div class="r" style="left:1956px;top:245px;width:604px;height:20px;background:#3e3e3e;border-bottom:1px solid #2f2f2f"></div>
<div class="tgd" style="left:1961px;top:251px"></div>
<svg class="sv" style="left:1977px;top:247px" width="15" height="16" viewBox="0 0 15 16"><path d="M7.5 1 14 4.2V11.8L7.5 15 1 11.8V4.2Z" fill="#8a8a8a" stroke="#fff" stroke-width="1" stroke-dasharray="2 1"/><path d="M1 4.2 7.5 7.4 14 4.2" fill="none" stroke="#fff"/></svg>
<div class="cb ck" style="left:1996px;top:248px"></div>
<div class="t" style="left:2016px;top:248px;font-weight:bold;letter-spacing:.1px">Volume</div>
<svg class="sv" style="left:2501px;top:249px" width="12" height="12"><use href="#help" width="12" height="12"/></svg>
<svg class="sv" style="left:2521px;top:249px" width="12" height="12"><use href="#sl" width="12" height="12"/></svg>
<div class="dots" style="left:2546px;top:250px"></div>
<div class="t" style="left:1975px;top:272px">Mode</div>
<div class="dd" style="left:2208px;top:271px;width:347px"></div><div class="t" style="left:2212px;top:271px">Global</div><div class="ar" style="left:2542px;top:277px"></div>
<div class="t" style="left:1975px;top:292px">Weight</div>
<div class="r" style="left:2208px;top:298px;width:288px;height:3px;background:#5e5e5e"></div>
<div class="r" style="left:2490px;top:293px;width:11px;height:11px;border-radius:50%;background:#999"></div>
<div class="f" style="left:2506px;top:290px;width:50px;height:18px"></div><div class="t" style="left:2509px;top:291px">1</div>
<div class="t" style="left:1975px;top:312px">Priority</div>
<div class="f" style="left:2208px;top:311px;width:348px;height:18px"></div><div class="t" style="left:2211px;top:312px">99</div>
<div class="t" style="left:1975px;top:332px">Profile</div>
<div class="f" style="left:2208px;top:331px;width:257px;height:18px"></div>
<svg class="sv" style="left:2213px;top:335px" width="8" height="11" viewBox="0 0 8 11"><rect width="8" height="11" fill="#aaa"/><rect x="2" y="3" width="4" height="4" fill="#333"/></svg>
<div class="t" style="left:2224px;top:332px">V (Volume Profile)</div>
<div class="r" style="left:2447px;top:332px;width:17px;height:16px;background:#383838"></div>
<svg class="sv" style="left:2451px;top:334px" width="10" height="10" viewBox="0 0 10 10"><circle cx="5" cy="5" r="4.4" fill="none" stroke="#c4c4c4"/><circle cx="5" cy="5" r="1.6" fill="#c4c4c4"/></svg>
<div class="btn" style="left:2467px;top:331px;width:42px;height:17px;border-radius:3px 0 0 3px">New</div>
<div class="btn" style="left:2510px;top:331px;width:45px;height:17px;border-radius:0 3px 3px 0">Clone</div>
<div class="r" style="left:1956px;top:355px;width:604px;height:1px;background:#232323"></div>

<!-- SSGI -->
<div class="r" style="left:1956px;top:356px;width:604px;height:17px;background:#333"></div>
<div class="tgd" style="left:1975px;top:362px;border-top-color:#707070"></div>
<div class="cb ck" style="left:1991px;top:360px"></div>
<div class="t" style="left:2007px;top:358px;letter-spacing:.3px;text-shadow:.3px 0 #c4c4c4">Screen Space Global Illumination</div>
<svg class="sv" style="left:2523px;top:360px" width="12" height="12"><use href="#help" width="12" height="12"/></svg>
<div class="dots" style="left:2546px;top:360px"></div>
<div class="t" style="left:1979px;top:374px;font-size:9.5px;color:#7d7d7d;letter-spacing:.6px">ALL</div>
<div class="t" style="left:2005px;top:374px;font-size:9.5px;color:#7d7d7d;letter-spacing:.6px">NONE</div>

<div class="cb cs ck" style="left:1987px;top:394px"></div><div class="t" style="left:2004px;top:392px">Enable</div><div class="cb ck" style="left:2208px;top:392px"></div>
<div class="cb cs ck" style="left:1987px;top:416px"></div><div class="t" style="left:2004px;top:414px">Tracing</div>
<div class="dd" style="left:2208px;top:413px;width:344px"></div><div class="t" style="left:2212px;top:413px">Ray Marching</div><div class="ar" style="left:2539px;top:419px"></div>
<div class="cb cs ck" style="left:2002px;top:440px"></div><div class="t" style="left:2019px;top:438px">Quality</div>
<div class="dd" style="left:2208px;top:437px;width:344px"></div><div class="t" style="left:2212px;top:437px">Custom</div><div class="ar" style="left:2539px;top:443px"></div>
<div class="cb cs" style="left:2017px;top:464px;opacity:.8"></div><div class="t d" style="left:2034px;top:462px">Max Ray Steps</div>
<div class="f" style="left:2208px;top:461px;width:344px;height:16px;background:#2f2f2f;border-color:#2a2a2a"></div><div class="t d" style="left:2211px;top:461px">64</div>
<div class="cb cs ck" style="left:2017px;top:486px"></div><div class="t" style="left:2034px;top:484px">Denoise</div><div class="cb ck" style="left:2208px;top:484px"></div>
<div class="cb cs" style="left:2032px;top:510px;opacity:.8"></div><div class="t d" style="left:2049px;top:508px">Half Resolution Denoiser</div><div class="cb" style="left:2208px;top:508px;background:#303030;border-color:#2c2c2c"></div>
<div class="cb cs" style="left:2032px;top:532px;opacity:.8"></div><div class="t d" style="left:2049px;top:530px">Denoiser Radius</div>
<div class="r" style="left:2208px;top:536px;width:290px;height:3px;background:#4f4f4f"></div>
<div class="r" style="left:2347px;top:532px;width:11px;height:11px;border-radius:50%;background:#6e6e6e"></div>
<div class="f" style="left:2503px;top:528px;width:49px;height:18px;background:#2f2f2f;border-color:#2a2a2a"></div><div class="t d" style="left:2506px;top:529px">0.5</div>
<div class="cb cs" style="left:2032px;top:554px;opacity:.8"></div><div class="t d" style="left:2049px;top:552px">Second Denoiser Pass</div><div class="cb ck dck" style="left:2208px;top:552px;background:#303030;border-color:#2c2c2c"></div>
<div class="cb cs ck" style="left:2002px;top:578px"></div><div class="t" style="left:2019px;top:576px">Full Resolution</div><div class="cb" style="left:2208px;top:576px"></div>
<div class="cb cs" style="left:2002px;top:600px;opacity:.8"></div><div class="t d" style="left:2019px;top:598px">Depth Tolerance</div>
<div class="r" style="left:2208px;top:604px;width:290px;height:3px;background:#4f4f4f"></div>
<div class="r" style="left:2263px;top:600px;width:11px;height:11px;border-radius:50%;background:#6e6e6e"></div>
<div class="f" style="left:2503px;top:596px;width:49px;height:18px;background:#2f2f2f;border-color:#2a2a2a"></div><div class="t d" style="left:2506px;top:597px">0.1</div>
<div class="cb cs ck" style="left:2002px;top:624px"></div><div class="t" style="left:2019px;top:622px">Ray Miss</div>
<div class="dd" style="left:2208px;top:621px;width:344px"></div><div class="t" style="left:2212px;top:621px">Reflection Probes</div><div class="ar" style="left:2539px;top:627px"></div>
<div class="r" style="left:1956px;top:648px;width:604px;height:1px;background:#232323"></div>
<div class="btn" style="left:1975px;top:658px;width:580px;height:17px">Add Override</div>
<div class="r" style="left:1956px;top:690px;width:604px;height:1px;background:#232323"></div>
<div class="btn" style="left:2144px;top:700px;width:228px;height:23px;line-height:21px">Add Component</div>
<svg class="sv" style="left:2440px;top:730px" width="11" height="18" viewBox="0 0 11 18"><path d="M.5.5V14.5L3.8 11.4 6 16.8 8.2 15.8 6 10.6H10.4Z" fill="#fff" stroke="#000" stroke-width=".8"/></svg>
</body></html>
